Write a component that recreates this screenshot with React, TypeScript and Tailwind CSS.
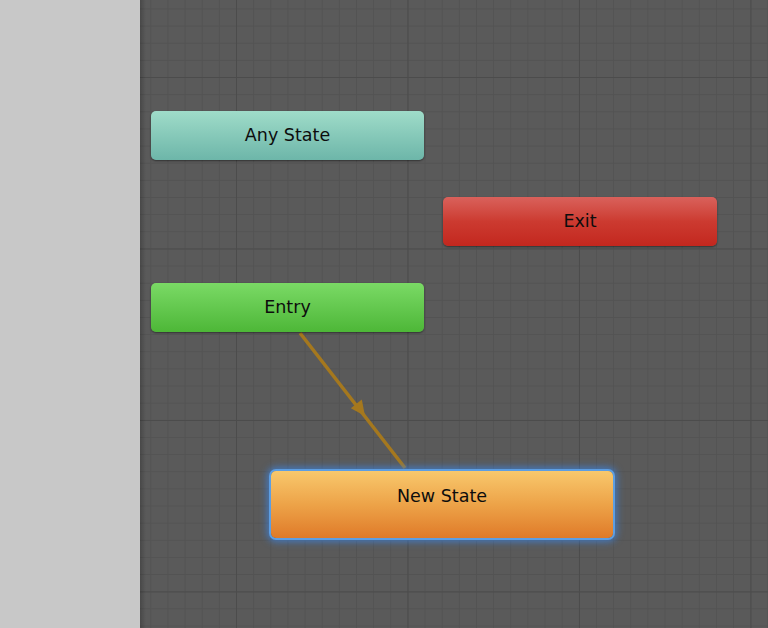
export default function App() {
  const font = "font-['DejaVu_Sans','Liberation_Sans',sans-serif]";

  return (
    <div className={`flex h-[628px] w-[768px] overflow-hidden ${font}`}>
      {/* left panel */}
      <div className="h-full w-[140px] shrink-0 bg-[#c8c8c8]" />

      {/* graph canvas */}
      <div
        className="
          relative h-full flex-1 bg-[#5a5a5a]
          [background-image:linear-gradient(to_right,#4c4c4c_1px,transparent_1px),linear-gradient(to_bottom,#4c4c4c_1px,transparent_1px),linear-gradient(to_right,#535353_1px,transparent_1px),linear-gradient(to_bottom,#535353_1px,transparent_1px)]
          [background-size:171.5px_171.5px,171.5px_171.5px,17.15px_17.15px,17.15px_17.15px]
          [background-position:96px_77px,96px_77px,96px_77px,96px_77px]
        "
      >
        <div className="absolute inset-y-0 left-0 w-[6px] bg-gradient-to-r from-black/20 to-transparent" />

        {/* transition Entry -> New State */}
        <svg className="absolute inset-0 h-full w-full" viewBox="140 0 628 628">
          <line x1="300" y1="333" x2="405" y2="468" stroke="#a5781e" strokeWidth="3.5" />
          <polygon points="365,416 361.8,399.5 350.8,408.2" fill="#a5781e" />
        </svg>

        {/* Any State */}
        <div className="absolute left-[11px] top-[111px] flex h-[49px] w-[273px] items-center justify-center rounded-[5px] bg-gradient-to-b from-[#9fdcc9] to-[#6db6a9] pb-[1px] text-[17.5px] text-[#0d0d0d] shadow-[0_1px_2px_rgba(0,0,0,0.45)]">
          Any State
        </div>

        {/* Exit */}
        <div className="absolute left-[303px] top-[197px] flex h-[49px] w-[274px] items-center justify-center rounded-[5px] bg-gradient-to-b from-[#d9615b] via-[#cc3a30] to-[#c3271e] pb-[1px] text-[17.5px] text-[#0d0d0d] shadow-[0_1px_2px_rgba(0,0,0,0.45)]">
          Exit
        </div>

        {/* Entry */}
        <div className="absolute left-[11px] top-[283px] flex h-[49px] w-[273px] items-center justify-center rounded-[5px] bg-gradient-to-b from-[#7ada65] to-[#4db737] pb-[1px] text-[17.5px] text-[#0d0d0d] shadow-[0_1px_2px_rgba(0,0,0,0.45)]">
          Entry
        </div>

        {/* New State (selected) */}
        <div className="absolute left-[131px] top-[471px] flex h-[67px] w-[342px] justify-center rounded-[5px] bg-gradient-to-b from-[#f8c86c] via-[#eda348] to-[#df7a28] pt-[12px] text-[17.5px] text-[#0d0d0d] shadow-[0_0_0_2px_#5d9ee2,0_0_7px_4px_rgba(60,130,220,0.75)]">
          New State
        </div>
      </div>
    </div>
  );
}
